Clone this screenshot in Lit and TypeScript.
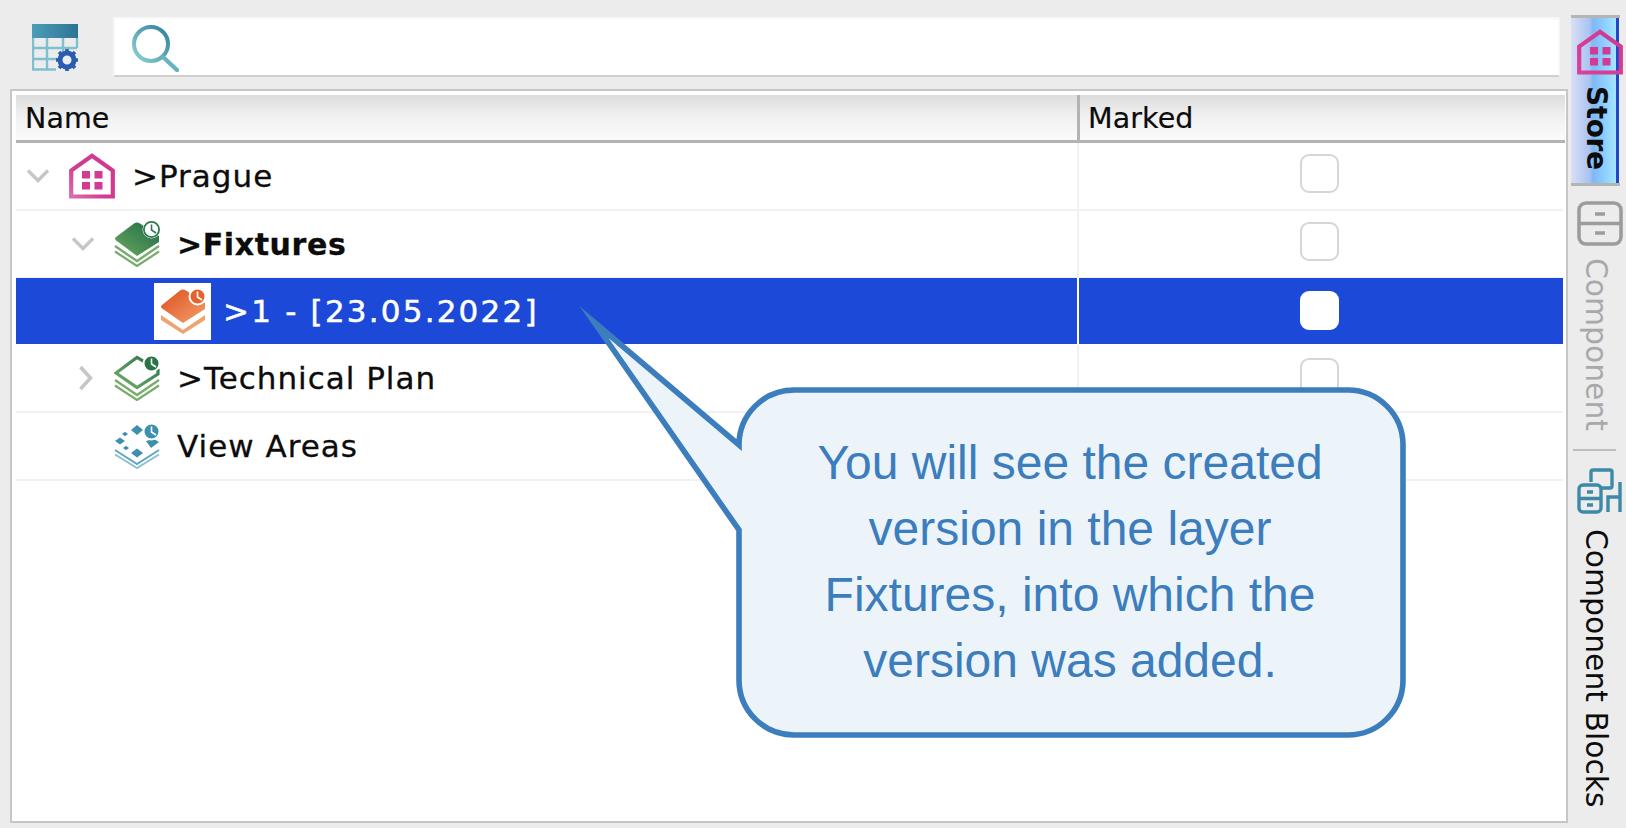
import { LitElement, html, css, svg } from "lit";
import { customElement } from "lit/decorators.js";

const layerLines = (c: string, n: number) => svg`
  <path d="M1 25 L23 ${40} L45 25" fill="none" stroke="${c}" stroke-width="2.4"/>
  ${n > 1 ? svg`<path d="M1 30.5 L23 45 L45 30.5" fill="none" stroke="${c}" stroke-width="2.2"/>` : ""}
`;

const clock = (ring: string, fill: string, hand: string) => svg`
  <circle cx="37.5" cy="8.5" r="8" fill="${fill}" stroke="${ring}" stroke-width="2"/>
  <path d="M37.5 3.5 V9 L42 12" fill="none" stroke="${hand}" stroke-width="1.6"/>
`;

const icons: Record<string, unknown> = {
  home: html`<svg class="ic" viewBox="0 0 46 46"><defs><linearGradient id="hg" x1="0" y1="1" x2="1" y2="0"><stop offset="0" stop-color="#db6cab"/><stop offset=".4" stop-color="#d33a93"/><stop offset="1" stop-color="#cf3a8e"/></linearGradient></defs>
    <path d="M2.2 43.5 V17.5 L23 2.8 L43.8 17.5 V43.5 Z" fill="#fff" stroke="url(#hg)" stroke-width="4.2"/>
    <g fill="#d33a93"><rect x="13" y="18" width="8" height="7.5"/><rect x="25.5" y="18" width="8" height="7.5"/><rect x="13" y="29" width="8" height="7.5"/><rect x="25.5" y="29" width="8" height="7.5"/></g></svg>`,
  fixtures: html`<svg class="ic" viewBox="0 0 46 46"><defs><linearGradient id="fg" x1="0" y1="1" x2="1" y2="0"><stop offset="0" stop-color="#6aa860"/><stop offset="1" stop-color="#1f6b45"/></linearGradient></defs>
    <path d="M1.5 19 Q0 17.5 2 16 L20 2.5 Q23 .5 26 2.5 L45 15 V21 L23 35 Z" fill="url(#fg)"/>
    ${layerLines("#76ad6d", 2)}${clock("#fff", "#fff", "#2d7a4e")}
    <circle cx="37.5" cy="8.5" r="7.6" fill="none" stroke="#2d7a4e" stroke-width="1.8"/></svg>`,
  version: html`<span class="tile"><svg class="ic" viewBox="0 0 46 46"><defs><linearGradient id="og" x1="0" y1="0" x2="1" y2="1"><stop offset="0" stop-color="#dd4f1b"/><stop offset="1" stop-color="#f3a06f"/></linearGradient></defs>
    <path d="M1.5 20 Q0 18.5 2 17 L20 2.5 Q23 .5 26 2.5 L45 15 V21 L23 35 Z" fill="url(#og)"/>
    <path d="M1 27 L23 42 L45 27 V32 L23 46 L1 32 Z" fill="#f0a371"/>
    ${clock("#fff", "#e2632f", "#fff")}</svg></span>`,
  plan: html`<svg class="ic" viewBox="0 0 46 46"><defs><linearGradient id="pg" x1="0" y1="1" x2="1" y2="0"><stop offset="0" stop-color="#76ad6d"/><stop offset="1" stop-color="#2a7349"/></linearGradient></defs>
    <path d="M2 18 L23 2.5 L44 15 V19 L23 32.5 Z" fill="#fff" stroke="url(#pg)" stroke-width="3.2"/>
    ${layerLines("#76ad6d", 2)}${clock("#fff", "#2a7349", "#fff")}</svg>`,
  areas: html`<svg class="ic" viewBox="0 0 46 46"><g fill="#3d8fae">
      <path d="M17 7 L23 2 L29 7 L23 12 Z"/><path d="M8 11 l3 -2.2 l3 2.2 l-3 2.2 Z"/><path d="M1 18 L6 14.5 L11 18 L6 21.5 Z"/>
      <path d="M9 25 l3 -2.2 l3 2.2 l-3 2.2 Z"/><path d="M17 30 L23 25.5 L29 30 L23 34.5 Z"/><path d="M32 18 L40 16 L45 19 L37 25 Z"/></g>
    <path d="M1 27 L23 41 L45 27" fill="none" stroke="#62a7bf" stroke-width="2"/><path d="M1 31.5 L23 45 L45 31.5" fill="none" stroke="#8cc1d2" stroke-width="2"/>
    ${clock("#fff", "#3d8fae", "#fff")}</svg>`,
};

const chevDown = html`<svg class="chev" viewBox="0 0 24 16"><path d="M2 2.5 L12 12.5 L22 2.5" fill="none" stroke="#c6c6c6" stroke-width="3.4"/></svg>`;
const chevRight = html`<svg class="chev-r" viewBox="0 0 16 26"><path d="M2.5 2 L12.5 13 L2.5 24" fill="none" stroke="#c6c6c6" stroke-width="3.6"/></svg>`;

const rows = [
  { label: ">Prague", level: 0, chev: "down", icon: "home" },
  { label: ">Fixtures", level: 1, chev: "down", icon: "fixtures", bold: true },
  { label: ">1 - [23.05.2022]", level: 2, chev: "", icon: "version", selected: true },
  { label: ">Technical Plan", level: 1, chev: "right", icon: "plan" },
  { label: "View Areas", level: 1, chev: "", icon: "areas" },
];

@customElement("app-root")
export class AppRoot extends LitElement {
  static styles = css`
    :host { display: flex; width: 1626px; height: 828px; overflow: hidden; position: relative; background: #ececec; font-family: "DejaVu Sans", sans-serif; color: #0c0c0c; }
    .main { width: 1570px; flex: none; display: flex; flex-direction: column; padding: 17px 0 5px 10px; box-sizing: border-box; }
    .toolbar { display: flex; height: 72px; flex: none; }
    .tool-ic { width: 47px; height: 47px; margin: 7px 0 0 22px; flex: none; }
    .search { margin-left: 34px; width: 1447px; height: 60px; box-sizing: border-box; background: #fff; border: 2px solid #f7f7f7; border-bottom: 2px solid #cfcfcf; display: flex; align-items: flex-start; padding: 5px 0 0 16px; }
    .search svg { width: 48px; height: 48px; }
    .frame { flex: 1; width: 1558px; box-sizing: border-box; background: #fff; border: 2px solid #c6c6c6; padding: 4px 1px 0 4px; }
    .grid { display: grid; grid-template-columns: 1061px 1fr; }
    .head { height: 48px; box-sizing: border-box; background: linear-gradient(#dcdcdc, #f0f0f0 45%, #fbfbfb); border-bottom: 3px solid #b3b3b3; font-size: 28.5px; display: flex; align-items: center; padding: 2px 0 0 9px; letter-spacing: .1px; -webkit-text-stroke: .2px #0c0c0c; }
    .head + .head { border-left: 3px solid #b3b3b3; padding-left: 8px; }
    .row { display: grid; grid-template-columns: 1061px 1fr; height: 68px; box-sizing: border-box; border-bottom: 2px solid #f1f1f1; margin-right: 2px; }
    .row.sel { height: 66px; margin: -1px 2px 1px 0; background: #1c49d8; color: #fff; border-bottom: 0; }
    .name { display: flex; align-items: center; padding-left: 10px; font-size: 31px; white-space: nowrap; letter-spacing: 1px; -webkit-text-stroke: .3px currentColor; }
    .l1 { padding-left: 55px; }
    .l2 { padding-left: 95px; }
    .chev-box { width: 43px; flex: none; display: flex; align-items: center; }
    .chev { width: 24px; height: 16px; }
    .chev-r { width: 16px; height: 26px; margin-left: 7px; }
    .ic { width: 46px; height: 46px; display: block; flex: none; }
    .ic-box { width: 63px; flex: none; display: flex; }
    .tile { width: 57px; height: 57px; background: #fff; display: flex; align-items: center; justify-content: center; }
    .l2 .ic-box { width: 69px; }
    .bold { font-weight: 700; font-size: 30px; letter-spacing: .6px; }
    .sel .name span:last-child { letter-spacing: 2.2px; -webkit-text-stroke: .5px #fff; }
    .mark { border-left: 2px solid #f1f1f1; display: flex; align-items: center; justify-content: center; padding-right: 3px; }
    .sel .mark { border-left: 2px solid #fff; }
    .check { width: 39px; height: 39px; box-sizing: border-box; background: #fff; border: 2px solid #d6d6d6; border-radius: 9px; margin-bottom: 2px; }
    .row:nth-child(2) .check, .row:nth-child(3) .check { margin-bottom: 6px; }
    .sel .check { border-color: #fff; }
    .rail { flex: 1; display: flex; flex-direction: column; padding: 15px 0 0 1px; align-items: flex-start; }
    .tab { width: 49px; display: flex; flex-direction: column; align-items: center; box-sizing: border-box; font-size: 29.8px; white-space: nowrap; }
    .tab span { writing-mode: vertical-rl; display: block; line-height: 34px; }
    .tab > svg { width: 46px; height: 46px; flex: none; position: relative; left: 4px; }
    .store { height: 171px; border-top: 3px solid #b5b5b5; border-bottom: 3px solid #b5b5b5; padding-top: 11px;
      background: linear-gradient(90deg, #d9dff5, #a9c3f2 38%, #7fb8f5 45%, #8fd0ff 70%, #a5e6ff 92%, #2148c8 92%, #2148c8 97%, transparent 97%); }
    .store span { margin-top: 11px; font-size: 28px; letter-spacing: -.4px; font-weight: 700; }
    .comp { margin-top: 15px; }
    .comp span { color: #a9a9a9; margin-top: 11px; }
    .sep { width: 43px; height: 2px; background: #bdbdbd; margin: 18px 0 17px 2px; flex: none; }
    .blocks span { margin-top: 15px; }
    .callout { position: absolute; left: 0; top: 0; width: 1626px; height: 828px; pointer-events: none; }
    .callout-text { position: absolute; left: 760px; top: 430px; width: 620px; text-align: center; font-family: "Liberation Sans", Arial, sans-serif; font-size: 48px; line-height: 66px; color: #3b7dbd; }
  `;

  render() {
    return html`
      <div class="main">
        <div class="toolbar">
          <svg class="tool-ic" viewBox="0 0 47 47">
            <defs><linearGradient id="tg" x1="0" x2="1"><stop offset="0" stop-color="#4c9db8"/><stop offset="1" stop-color="#2d7395"/></linearGradient></defs>
            <rect x="0" y="0" width="46" height="14" fill="url(#tg)"/>
            <path d="M1 14 V45.5 H24 M1 24 H45 M1 35 H26 M15 14 V45 M31 14 V30 M45 14 V24" fill="none" stroke="#7fc0d0" stroke-width="2.4"/>
            <g transform="translate(35 36)">
              <circle r="7" fill="none" stroke="#2b5cb0" stroke-width="5"/>
              <path d="M0 -11 V-7 M0 11 V7 M-11 0 H-7 M11 0 H7 M-8 -8 L-5 -5 M8 8 L5 5 M-8 8 L-5 5 M8 -8 L5 -5" stroke="#2b5cb0" stroke-width="3.6"/>
            </g>
          </svg>
          <div class="search">
            <svg viewBox="0 0 48 48">
              <defs><linearGradient id="sg" x1="0" y1="1" x2="1" y2="0"><stop offset="0" stop-color="#8fd0d6"/><stop offset="1" stop-color="#2f8098"/></linearGradient></defs>
              <circle cx="20" cy="20" r="17" fill="none" stroke="url(#sg)" stroke-width="4"/>
              <path d="M32 33 L46 46" stroke="#66b3c2" stroke-width="4.4" stroke-linecap="round"/>
            </svg>
          </div>
        </div>
        <div class="frame">
          <div class="grid">
            <div class="head">Name</div>
            <div class="head">Marked</div>
          </div>
          ${rows.map(
            (r) => html`
              <div class="row ${r.selected ? "sel" : ""}">
                <div class="name l${r.level}">
                  <span class="chev-box">${r.chev === "down" ? chevDown : r.chev === "right" ? chevRight : ""}</span>
                  <span class="ic-box">${icons[r.icon]}</span>
                  <span class="${r.bold ? "bold" : ""}">${r.label}</span>
                </div>
                <div class="mark"><span class="check"></span></div>
              </div>
            `
          )}
        </div>
      </div>
      <div class="rail">
        <div class="tab store">
          <svg viewBox="0 0 46 46"><defs><linearGradient id="hr" x1="0" y1="1" x2="1" y2="0"><stop offset="0" stop-color="#d8409a"/><stop offset="1" stop-color="#cf3a8e"/></linearGradient></defs>
            <path d="M2.2 43.5 V17.5 L23 2.8 L43.8 17.5 V43.5 Z" fill="none" stroke="url(#hr)" stroke-width="4.2"/>
            <g fill="#d33a93"><rect x="13" y="18" width="8" height="7.5"/><rect x="25.5" y="18" width="8" height="7.5"/><rect x="13" y="29" width="8" height="7.5"/><rect x="25.5" y="29" width="8" height="7.5"/></g></svg>
          <span>Store</span>
        </div>
        <div class="tab comp">
          <svg viewBox="0 0 46 46"><rect x="2" y="2" width="42" height="41" rx="7" fill="none" stroke="#9c9c9c" stroke-width="3.6"/>
            <path d="M2 22.5 H44 M18 13 H28 M18 32 H28" stroke="#9c9c9c" stroke-width="3.4"/></svg>
          <span>Component</span>
        </div>
        <div class="sep"></div>
        <div class="tab blocks">
          <svg viewBox="0 0 46 46"><g fill="none" stroke-width="3.4" stroke="#3e88a8">
            <path d="M14 14 V4 Q14 2 16 2 H33 Q35 2 35 4 V18 Q35 20 33 20 H25"/>
            <rect x="2" y="17" width="22" height="27" rx="4" fill="#ececec"/>
            <path d="M2 30.5 H24 M10 24 H16 M10 37 H16" /><path d="M43 14 V44 M31 44 V29 H43"/></g></svg>
          <span>Component Blocks</span>
        </div>
      </div>
      <svg class="callout" viewBox="0 0 1626 828">
        <path d="M594 322 L739 445 A55 55 0 0 1 794 390 H1348 A55 55 0 0 1 1403 445 V680 A55 55 0 0 1 1348 735 H794 A55 55 0 0 1 739 680 V530 Z" fill="#edf4f9" stroke="#3b7dbd" stroke-width="5.6" stroke-miterlimit="12"/>
      </svg>
      <div class="callout-text">You will see the created<br />version in the layer<br />Fixtures, into which the<br />version was added.</div>
    `;
  }
}
